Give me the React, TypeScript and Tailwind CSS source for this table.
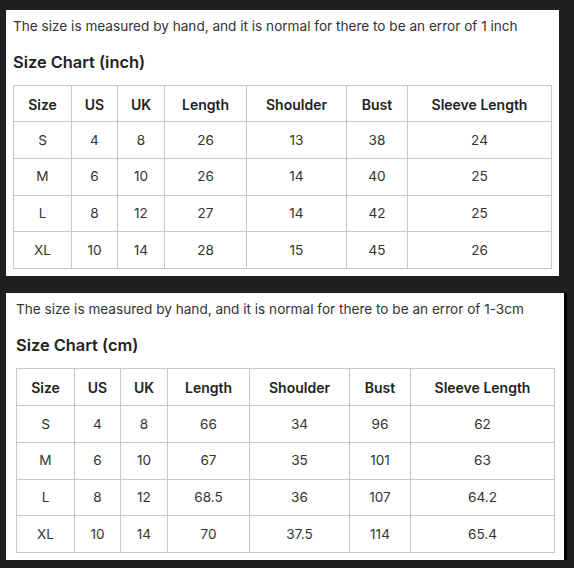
const headers = ["Size", "US", "UK", "Length", "Shoulder", "Bust", "Sleeve Length"];
const widths = ["w-[58px]", "w-[46px]", "w-[47px]", "w-[82px]", "w-[100px]", "w-[61px]", "w-[144px]"];

const inchRows = [
  ["S", "4", "8", "26", "13", "38", "24"],
  ["M", "6", "10", "26", "14", "40", "25"],
  ["L", "8", "12", "27", "14", "42", "25"],
  ["XL", "10", "14", "28", "15", "45", "26"],
];

const cmRows = [
  ["S", "4", "8", "66", "34", "96", "62"],
  ["M", "6", "10", "67", "35", "101", "63"],
  ["L", "8", "12", "68.5", "36", "107", "64.2"],
  ["XL", "10", "14", "70", "37.5", "114", "65.4"],
];

const SizeTable = ({ rows, headH }: { rows: string[][]; headH: string }) => (
  <table className="w-[539px] table-fixed border-collapse text-[13.6px] text-[#333]">
    <colgroup>
      {widths.map((w, i) => (
        <col key={i} className={w} />
      ))}
    </colgroup>
    <thead>
      <tr className={headH}>
        {headers.map((h) => (
          <th key={h} className="border border-[#c8c8c8] pt-[1px] text-center text-[14px] font-semibold text-[#222]">
            {h}
          </th>
        ))}
      </tr>
    </thead>
    <tbody>
      {rows.map((row, i) => (
        <tr key={i} className="h-[36.75px]">
          {row.map((cell, j) => (
            <td key={j} className="border border-[#c8c8c8] text-center">
              {cell}
            </td>
          ))}
        </tr>
      ))}
    </tbody>
  </table>
);

const Panel = ({
  note,
  title,
  rows,
  headH,
  className,
}: {
  note: string;
  title: string;
  rows: string[][];
  headH: string;
  className: string;
}) => (
  <div className={`bg-white pt-[6px] pb-[7px] ${className}`}>
    <p className="text-[13.6px] leading-[20px] text-[#333]">{note}</p>
    <h2 className="mt-[14px] text-[16.4px] font-semibold leading-[24px] text-[#222]">{title}</h2>
    <div className="mt-[11px]">
      <SizeTable rows={rows} headH={headH} />
    </div>
  </div>
);

export default function App() {
  return (
    <div className="min-h-[568px] w-[574px] bg-[#1f1f1f] pl-[6px] pt-[10px] font-['Inter',sans-serif]">
      <Panel
        className="w-[553px] px-[7px]"
        note="The size is measured by hand, and it is normal for there to be an error of 1 inch"
        title="Size Chart (inch)"
        rows={inchRows}
        headH="h-[36px]"
      />
      <div className="mt-[17px] w-[561px] border-r-[3px] border-black">
        <Panel
          className="px-[10px]"
          note="The size is measured by hand, and it is normal for there to be an error of 1-3cm"
          title="Size Chart (cm)"
          rows={cmRows}
          headH="h-[37px]"
        />
      </div>
    </div>
  );
}
